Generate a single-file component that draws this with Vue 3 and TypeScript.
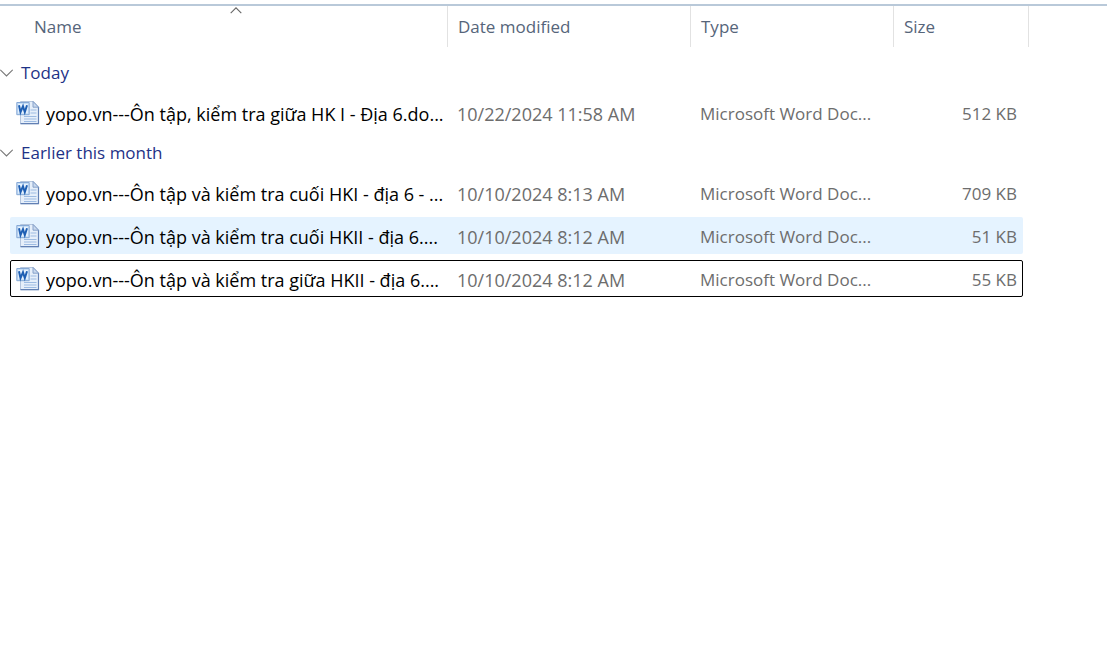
<script setup lang="ts">
import { ref } from 'vue'

interface FileItem {
  name: string
  modified: string
  type: string
  size: string
  state?: 'hovered' | 'focused'
}

interface FileGroup {
  label: string
  open: boolean
  files: FileItem[]
}

const headings: string[] = ['Name', 'Date modified', 'Type', 'Size']
const wordType = 'Microsoft Word Doc...'

const groups = ref<FileGroup[]>([
  {
    label: 'Today',
    open: true,
    files: [
      { name: 'yopo.vn---Ôn tập, kiểm tra giữa HK I - Địa 6.do...', modified: '10/22/2024 11:58 AM', type: wordType, size: '512 KB' },
    ],
  },
  {
    label: 'Earlier this month',
    open: true,
    files: [
      { name: 'yopo.vn---Ôn tập và kiểm tra cuối HKI - địa 6 - ...', modified: '10/10/2024 8:13 AM', type: wordType, size: '709 KB' },
      { name: 'yopo.vn---Ôn tập và kiểm tra cuối HKII - địa 6....', modified: '10/10/2024 8:12 AM', type: wordType, size: '51 KB', state: 'hovered' },
      { name: 'yopo.vn---Ôn tập và kiểm tra giữa HKII - địa 6....', modified: '10/10/2024 8:12 AM', type: wordType, size: '55 KB', state: 'focused' },
    ],
  },
])
</script>

<template>
  <main class="explorer">
    <table class="files">
      <thead>
        <tr class="head">
          <th v-for="(heading, i) in headings" :key="heading" scope="col" :aria-sort="i === 0 ? 'ascending' : undefined">
            <button type="button" class="sort">{{ heading }}</button>
            <svg v-if="i === 0" class="arrow" width="12" height="7" viewBox="0 0 12 7" aria-hidden="true">
              <path d="M.7 6.2 6 .9l5.3 5.3" fill="none" stroke="#666" stroke-width="1.1" />
            </svg>
          </th>
        </tr>
      </thead>
      <tbody v-for="group in groups" :key="group.label">
        <tr class="group">
          <th colspan="4" scope="rowgroup">
            <button type="button" class="toggle" :aria-expanded="group.open" @click="group.open = !group.open">
              <svg :class="['chevron', { closed: !group.open }]" width="13" height="8" viewBox="0 0 13 8" aria-hidden="true">
                <path d="M.3.8 6.5 7l6.2-6.2" fill="none" stroke="#777" stroke-width="1.1" />
              </svg>
              {{ group.label }}
            </button>
          </th>
        </tr>
        <template v-if="group.open">
          <tr v-for="file in group.files" :key="file.name" :class="['file', file.state]">
            <td class="name">
              <svg class="icon" width="24" height="24" viewBox="0 0 24 24" aria-hidden="true">
                <path d="M4.5.5h13l5 5.2v17h-18z" fill="#e6effa" stroke="#b4c5dd" />
                <path d="M22.5 6v16.7h-18" fill="none" stroke="#6280b4" stroke-width="1.2" />
                <path d="M17 .5v5.7h5.5z" fill="#c9d9ee" stroke="#7f9bc6" stroke-width=".9" />
                <path d="M14.5 9h6M14.5 12h6M8 15.5h12.5M8 18h12.5M8 20.5h12.5" stroke="#9dbbe2" stroke-width="1" />
                <path d="M.8 1.5h12.4v12.2H.8z" fill="#c5ddf5" stroke="#86a9d6" />
                <path d="M2.2 3h9.6v9.3H2.2z" fill="#e8f3fe" />
                <path d="m3 4.2 1.5 7 2.5-6 1.8 6 2.2-7" fill="none" stroke="#1f5fb3" stroke-width="2" />
              </svg>
              <span class="label">{{ file.name }}</span>
            </td>
            <td>{{ file.modified }}</td>
            <td class="type">{{ file.type }}</td>
            <td class="size">{{ file.size }}</td>
          </tr>
        </template>
      </tbody>
    </table>
  </main>
</template>

<style>
body {
  margin: 0;
  background: #fff;
}
</style>

<style scoped>
.explorer {
  margin-top: 4px;
  border-top: 2px solid #b9c9d9;
  font-family: "Open Sans", "Noto Sans", sans-serif;
  font-size: 18px;
  line-height: 24px;
  color: #6d6d6d;
}

.files,
.files thead,
.files tbody {
  display: block;
}

.files {
  margin-right: 78px;
}

.head,
.file {
  display: grid;
  grid-template-columns: minmax(0, 1fr) 243px 203px 135px;
}

.head {
  height: 41px;
  margin-bottom: 10px;
}

th,
td {
  box-sizing: border-box;
  padding: 0;
  font-weight: 400;
  text-align: left;
  white-space: nowrap;
}

.head th {
  position: relative;
  border-right: 1px solid #e2e2e2;
}

button {
  border: 0;
  background: none;
  font: inherit;
  font-size: 17px;
  text-align: left;
}

.sort {
  width: 100%;
  height: 41px;
  padding: 0 10px;
  color: #56657a;
}

.head th:first-child .sort {
  padding-left: 34px;
}

.arrow {
  position: absolute;
  top: 1px;
  left: calc(50% + 6px);
}

.group,
.group th {
  display: block;
}

.group {
  margin-bottom: 3px;
}

.toggle {
  display: flex;
  align-items: center;
  gap: 8px;
  height: 34px;
  padding: 0 0 2px;
  color: #1e3287;
}

.chevron.closed {
  transform: rotate(-90deg);
}

.file {
  height: 37px;
  margin: 0 6px 6px 10px;
  grid-template-columns: minmax(0, 1fr) 243px 203px 129px;
  align-items: center;
  border-radius: 2px;
}

.file td {
  padding: 2px 0 0 9px;
}

.file .name {
  display: flex;
  align-items: center;
  gap: 6px;
  padding-left: 6px;
  color: #000;
}

.icon {
  flex: none;
  margin-bottom: 2px;
}

.label {
  overflow: hidden;
}

.file .type,
.file .size {
  font-size: 17px;
}

.file .size {
  padding-right: 6px;
  text-align: right;
}

.hovered {
  background: #e5f3ff;
}

.focused {
  outline: 1px solid #000;
  outline-offset: -1px;
}
</style>
